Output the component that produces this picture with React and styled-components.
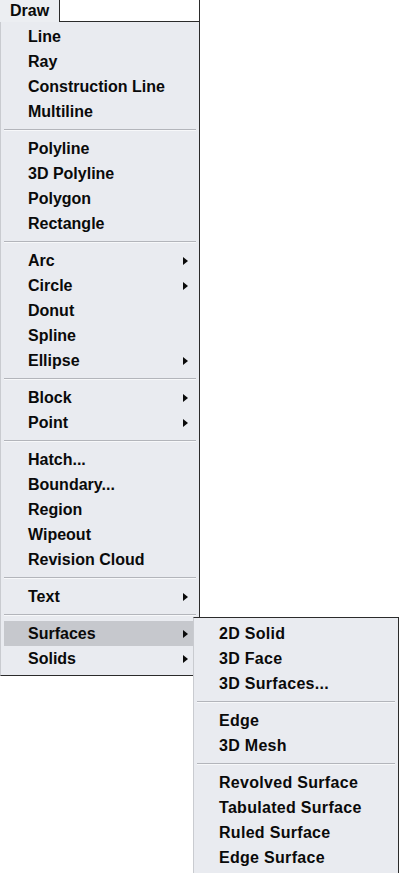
import React from "react";
import styled, { createGlobalStyle } from "styled-components";

const GlobalStyle = createGlobalStyle`
  body {
    margin: 0;
    background: #ffffff;
    font-family: "Liberation Sans", Arial, sans-serif;
  }
`;

const Page = styled.div`
  width: 400px;
  height: 873px;
  overflow: hidden;
`;

const TabRow = styled.div`
  display: flex;
  width: 200px;
  height: 22px;
`;

const Tab = styled.div`
  width: 60px;
  box-sizing: border-box;
  height: 22px;
  padding-left: 10px;
  background: #eceef2;
  border-right: 1px solid #2b2b2b;
  font-size: 16px;
  font-weight: bold;
  line-height: 21px;
  color: #0a0a0a;
`;

const TabFill = styled.div`
  flex: 1;
  border-bottom: 1px solid #2b2b2b;
  border-right: 1px solid #2b2b2b;
  box-sizing: border-box;
`;

const MenuBox = styled.div`
  position: relative;
  width: ${(p) => p.$width}px;
  box-sizing: border-box;
  background: #e9ebf0;
  border-left: 1px solid #c9cbd0;
  border-right: 1px solid #2b2b2b;
  border-bottom: 1px solid #2b2b2b;
  border-top: ${(p) => (p.$sub ? "1px solid #2b2b2b" : "none")};
  padding: ${(p) => (p.$sub ? "3px 3px 3px" : "2px 3px 4px")};
`;

const SubMenu = styled(MenuBox)`
  position: absolute;
  left: 189px;
  top: -4px;
  z-index: 2;
`;

const Row = styled.div`
  position: relative;
  display: flex;
  align-items: center;
  justify-content: space-between;
  height: 25px;
  padding-left: ${(p) => p.$indent}px;
  padding-right: 8px;
  background: ${(p) => (p.$active ? "#c6c8cd" : "transparent")};
  font-size: 16px;
  font-weight: bold;
  letter-spacing: ${(p) => (p.$wide ? "0.3px" : "0")};
  color: #0a0a0a;
  white-space: nowrap;
`;

const Arrow = styled.span`
  width: 0;
  height: 0;
  border-left: 5px solid #0a0a0a;
  border-top: 4.5px solid transparent;
  border-bottom: 4.5px solid transparent;
`;

const Separator = styled.div`
  height: 12px;
  display: flex;
  align-items: center;
  &::after {
    content: "";
    flex: 1;
    border-top: 1px solid #b3b5bb;
    border-bottom: 1px solid #f7f8fa;
    box-sizing: border-box;
    height: 2px;
  }
`;

const surfaces = [
  ["2D Solid", "3D Face", "3D Surfaces..."],
  ["Edge", "3D Mesh"],
  ["Revolved Surface", "Tabulated Surface", "Ruled Surface", "Edge Surface"],
];

const draw = [
  [["Line"], ["Ray"], ["Construction Line"], ["Multiline"]],
  [["Polyline"], ["3D Polyline"], ["Polygon"], ["Rectangle"]],
  [["Arc", 1], ["Circle", 1], ["Donut"], ["Spline"], ["Ellipse", 1]],
  [["Block", 1], ["Point", 1]],
  [["Hatch..."], ["Boundary..."], ["Region"], ["Wipeout"], ["Revision Cloud"]],
  [["Text", 1]],
  [["Surfaces", 1, "open"], ["Solids", 1]],
];

function SurfacesMenu() {
  return (
    <SubMenu $sub $width={206}>
      {surfaces.map((group, gi) => (
        <React.Fragment key={gi}>
          {gi > 0 && <Separator />}
          {group.map((label) => (
            <Row key={label} $indent={22} $wide>
              {label}
            </Row>
          ))}
        </React.Fragment>
      ))}
    </SubMenu>
  );
}

export default function App() {
  return (
    <Page>
      <GlobalStyle />
      <TabRow>
        <Tab>Draw</Tab>
        <TabFill />
      </TabRow>
      <MenuBox $width={200}>
        {draw.map((group, gi) => (
          <React.Fragment key={gi}>
            {gi > 0 && <Separator />}
            {group.map(([label, sub, open]) => (
              <Row key={label} $indent={24} $active={!!open}>
                {label}
                {sub && <Arrow />}
                {open && <SurfacesMenu />}
              </Row>
            ))}
          </React.Fragment>
        ))}
      </MenuBox>
    </Page>
  );
}
